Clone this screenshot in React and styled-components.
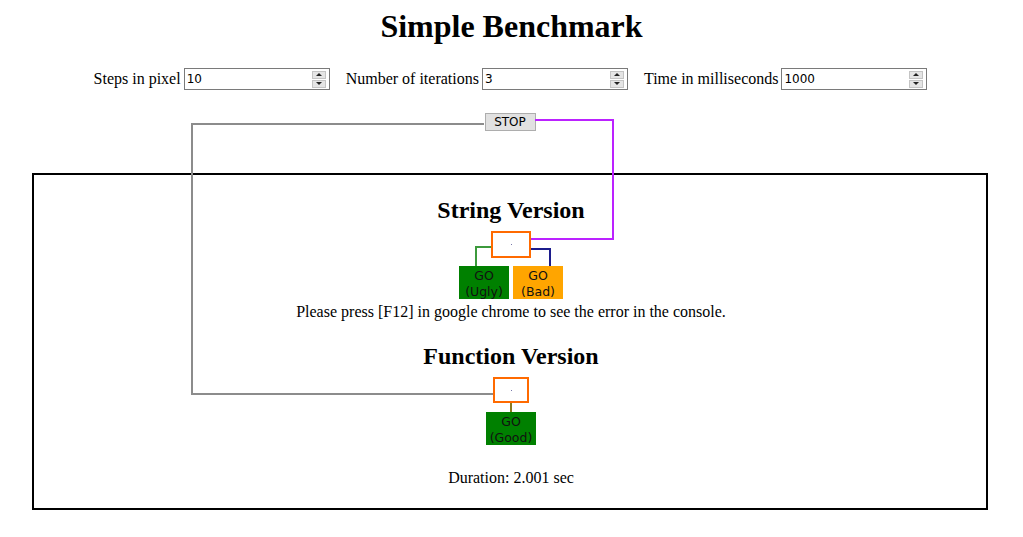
import React from "react";
import styled, { createGlobalStyle } from "styled-components";

const GlobalStyle = createGlobalStyle`
    html, body {
        margin: 0;
        padding: 0;
        background: #fff;
    }
    body {
        font-family: "Liberation Serif", "Times New Roman", serif;
        font-size: 16px;
        color: #000;
    }
`

const Page = styled.div`
    position: relative;
    width: 1023px;
    height: 537px;
    overflow: hidden;
`

const Title = styled.h1`
    margin: 8px 0 0;
    font-size: 32px;
    line-height: 37px;
    font-weight: bold;
    text-align: center;
`

const Controls = styled.div`
    display: flex;
    justify-content: center;
    align-items: center;
    gap: 16px;
    margin-top: 23px;
    height: 22px;
    padding-right: 2px;
`

const Group = styled.label`
    display: flex;
    align-items: center;
    gap: 3px;
    font-size: 16px;
    line-height: 22px;
`

const Field = styled.div`
    display: flex;
    align-items: center;
    box-sizing: border-box;
    width: 146px;
    height: 22px;
    border: 1px solid #7a7a7a;
    background: #fff;
    padding: 0 3px 0 2px;
`

const FieldText = styled.span`
    flex: 1;
    font-family: "DejaVu Sans", Tahoma, sans-serif;
    font-size: 12px;
`

const Spinner = styled.div`
    display: flex;
    flex-direction: column;
    width: 14px;
    height: 17px;
    gap: 1px;
`

const SpinHalf = styled.div`
    flex: 1;
    display: flex;
    align-items: center;
    justify-content: center;
    background: #e5e5e5;
    border: 1px solid #c4c4c4;
`

const Arrow = styled.span`
    width: 0;
    height: 0;
    border-left: 3px solid transparent;
    border-right: 3px solid transparent;
    ${(p) => p.up
        ? "border-bottom: 3px solid #222;"
        : "border-top: 3px solid #222;"}
`

const StopRow = styled.div`
    display: flex;
    justify-content: center;
    margin-top: 23px;
    padding-right: 3px;
`

const StopButton = styled.button`
    box-sizing: border-box;
    width: 51px;
    height: 18px;
    padding: 1px 0 0;
    background: #e1e1e1;
    border: 1px solid #adadad;
    font-family: "DejaVu Sans", Tahoma, sans-serif;
    font-size: 12px;
    line-height: 15px;
    color: #000;
`

const Panel = styled.div`
    margin: 42px 35px 0 32px;
    border: 2px solid #000;
    padding: 21px 0 21px 2px;
    display: flex;
    flex-direction: column;
    align-items: center;
`

const Heading = styled.h2`
    margin: ${(p) => p.gap || 0}px 0 0;
    font-size: 24px;
    line-height: 28px;
    font-weight: bold;
`

const Node = styled.div`
    box-sizing: border-box;
    margin-top: 7px;
    width: ${(p) => p.w}px;
    height: ${(p) => p.h}px;
    border: 2px solid #ff6a00;
    background: #fff;
    display: flex;
    align-items: center;
    justify-content: center;
`

const Dot = styled.span`
    width: 1px;
    height: 1px;
    background: #7777aa;
`

const ButtonRow = styled.div`
    display: flex;
    gap: 4px;
    margin-top: ${(p) => p.gap}px;
`

const GoButton = styled.div`
    box-sizing: border-box;
    width: 50px;
    height: 33px;
    padding-top: 2px;
    background: ${(p) => p.color};
    font-family: "DejaVu Sans", Tahoma, sans-serif;
    font-size: 12.5px;
    line-height: 16px;
    text-align: center;
    color: #111;
`

const Note = styled.p`
    margin: ${(p) => p.gap}px 0 0;
    font-size: 16px;
    line-height: 18px;
`

const Wires = styled.svg`
    position: absolute;
    left: 0;
    top: 0;
    pointer-events: none;
`

const inputs = [
    { label: "Steps in pixel", value: "10" },
    { label: "Number of iterations", value: "3" },
    { label: "Time in milliseconds", value: "1000" },
]

const wires = [
    { d: "M484 124 H192 V394 H493", color: "#8c8c8c" },
    { d: "M535 120 H613 V239 H531", color: "#bb22ff" },
    { d: "M491 247 H476 V266", color: "#3c9a3c" },
    { d: "M531 249 H550 V266", color: "#1c1c8c" },
    { d: "M511 403 V412", color: "#8a7a20" },
]

const App = () => {
    return (
        <Page>
            <GlobalStyle />
            <Title>Simple Benchmark</Title>
            <Controls>
                {inputs.map((item, index) => (
                    <Group key={index}>
                        {item.label}
                        <Field>
                            <FieldText>{item.value}</FieldText>
                            <Spinner>
                                <SpinHalf><Arrow up /></SpinHalf>
                                <SpinHalf><Arrow /></SpinHalf>
                            </Spinner>
                        </Field>
                    </Group>
                ))}
            </Controls>
            <StopRow>
                <StopButton>STOP</StopButton>
            </StopRow>
            <Panel>
                <Heading>String Version</Heading>
                <Node w={40} h={27}><Dot /></Node>
                <ButtonRow gap={8}>
                    <GoButton color="#008000">GO<br />(Ugly)</GoButton>
                    <GoButton color="#ffa500">GO<br />(Bad)</GoButton>
                </ButtonRow>
                <Note gap={4}>Please press [F12] in google chrome to see the error in the console.</Note>
                <Heading gap={21}>Function Version</Heading>
                <Node w={36} h={26}><Dot /></Node>
                <ButtonRow gap={9}>
                    <GoButton color="#008000">GO<br />(Good)</GoButton>
                </ButtonRow>
                <Note gap={24}>Duration: 2.001 sec</Note>
            </Panel>
            <Wires width="1023" height="537">
                {wires.map((w, i) => (
                    <path key={i} d={w.d} stroke={w.color} strokeWidth="2" fill="none" />
                ))}
            </Wires>
        </Page>
    )
}

export default App;
